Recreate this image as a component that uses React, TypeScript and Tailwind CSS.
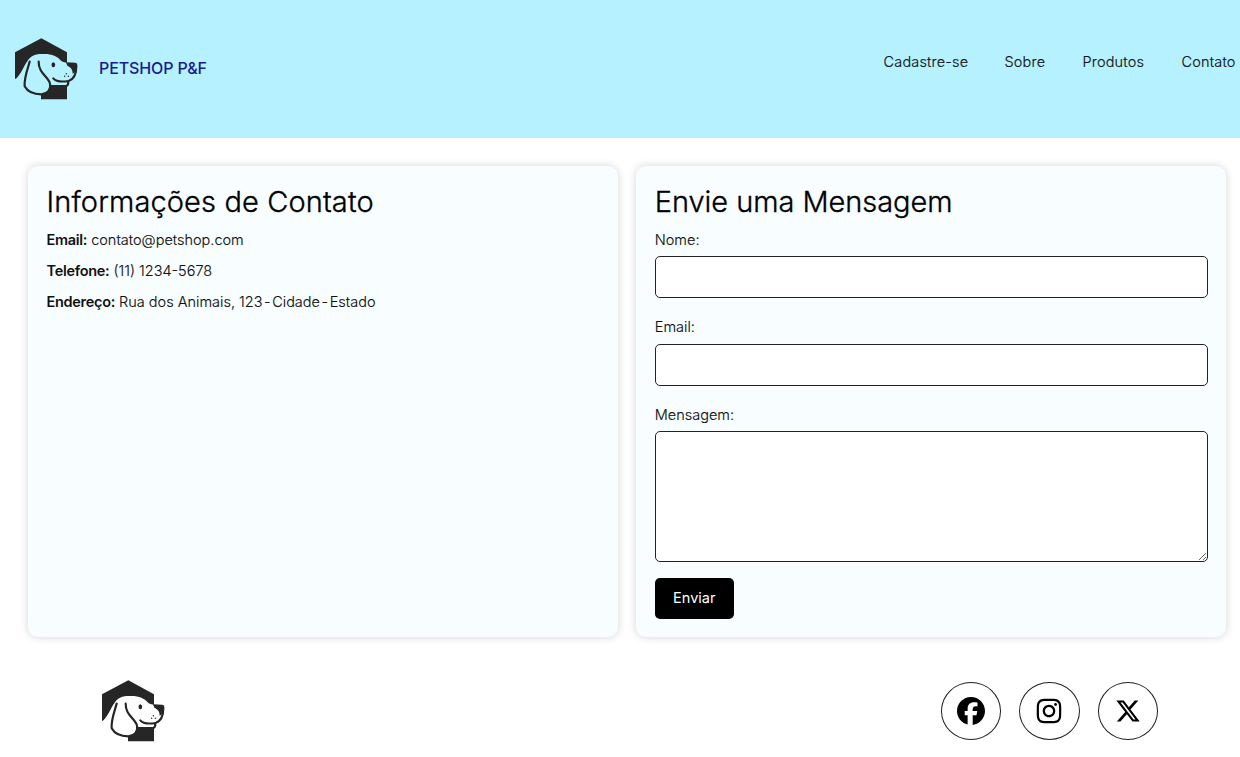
import { FaFacebook, FaInstagram, FaXTwitter } from "react-icons/fa6";

function DogLogo({ face }: { face: string }) {
  return (
    <svg width="65" height="63" viewBox="42 39 195 189" className="block shrink-0" aria-label="Petshop P&F">
      <path d="M45 82 L124 40 L201 82 V114 C196 111 190 113 184 108 C170 92 156 86 127 87 C106 87 92 91 82 109 C72 122 62 150 47 162 Q45 162 45 159 Z" fill="#262626" />
      <path d="M123 206 C142 206 153 194 153 180 H201 V223 H123 Z" fill="#262626" />
      <path d="M198 112 L226 113 Q233 114 232 121 L227 140 L218 146 C218 132 211 126 202 122 Z" fill="#262626" />
      <path d="M90 110 C82 135 72 158 74 184 C83 201 104 208 124 208 C143 207 154 193 150 176 C146 155 115 145 116 110" fill={face} />
      <g fill="none" stroke="#262626" strokeWidth="6.5" strokeLinecap="round" strokeLinejoin="round">
        <path d="M229 124 C229 146 221 163 206 168 C187 171 167 169 160 160" />
        <path d="M204 169 C206 176 205 180 199 183" />
        <path d="M89 110 C82 135 72 158 74 184 C83 201 104 208 124 208 C143 207 154 193 150 176 C146 155 115 145 116 110" />
      </g>
      <ellipse cx="160" cy="119" rx="5.5" ry="7.5" fill="#262626" />
      <g fill="#262626">
        <circle cx="199" cy="146" r="2.2" />
        <circle cx="194" cy="154" r="2.2" />
        <circle cx="205" cy="154" r="2.2" />
      </g>
    </svg>
  );
}

const links = [
  { label: "Cadastre-se", style: "w-[84px]" },
  { label: "Sobre", style: "w-[41px]" },
  { label: "Produtos", style: "w-[62px]" },
  { label: "Contato", style: "w-[54px]" },
];

const field = "block w-full rounded-[5px] border border-[#222] bg-white";
const strong = "font-semibold tracking-[-0.3px] [-webkit-text-stroke:0]";
const social = "flex h-[58px] w-[60.5px] items-center justify-center rounded-[50%] border border-[#222]";
const card = "rounded-[10px] bg-[#f8feff] pt-[18px] pr-[18px] pl-[19px] shadow-[0_0_9px_rgba(0,0,0,0.17)]";
const heading = "text-[29px] leading-[36px] whitespace-nowrap text-black [-webkit-text-stroke:0.35px_black]";

export default function App() {
  return (
    <div className="h-[757px] overflow-hidden bg-white font-['Inter',sans-serif] text-[14.5px] leading-[22px] font-light text-[#111] [-webkit-text-stroke:0.15px_#111]">
      <header className="flex h-[138px] items-start justify-between bg-[#b5f1ff] pt-[38px] pr-[4.5px] pl-[14px]">
        <div className="flex items-start">
          <DogLogo face="#b5f1ff" />
          <span className="mt-[19px] ml-5 text-[16px] font-medium tracking-[-0.1px] whitespace-nowrap text-[#1a1a8c] [-webkit-text-stroke:0]">PETSHOP P&amp;F</span>
        </div>
        <nav className="mt-[12.5px] flex gap-[37px] tracking-[0.18px]">
          {links.map((l) => (
            <a key={l.label} href="#" className={`${l.style} whitespace-nowrap`}>{l.label}</a>
          ))}
        </nav>
      </header>

      <main className="mt-[27.5px] grid h-[471.5px] grid-cols-2 gap-[18px] pr-[14px] pl-[27.5px]">
        <section className={card}>
          <h2 className={`${heading} tracking-[0.12px]`}>Informações de Contato</h2>
          <div className="mt-[9px] flex flex-col gap-[9.4px] whitespace-nowrap">
            <p><strong className={strong}>Email:</strong> contato@petshop.com</p>
            <p><strong className={strong}>Telefone:</strong> (11) 1234-5678</p>
            <p><strong className={strong}>Endereço:</strong> Rua dos Animais, 123<span className="[word-spacing:-2.5px]"> - </span>Cidade<span className="[word-spacing:-2.5px]"> - </span>Estado</p>
          </div>
        </section>

        <section className={card}>
          <h2 className={`${heading} tracking-[-0.05px]`}>Envie uma Mensagem</h2>
          <form className="mt-[9px]">
            <label className="block">Nome:</label>
            <input className={`${field} mt-[5.5px] h-[42px]`} />
            <label className="mt-[18px] block">Email:</label>
            <input className={`${field} mt-[5.5px] h-[42px]`} />
            <label className="mt-[18px] block">Mensagem:</label>
            <textarea className={`${field} mt-[5.5px] h-[131px] resize-y`} />
            <button type="button" className="mt-4 block h-[41px] w-[79px] rounded-[5px] bg-black pb-[2px] font-normal text-white [-webkit-text-stroke:0]">Enviar</button>
          </form>
        </section>
      </main>

      <footer className="mt-[43px] flex items-start justify-between pr-[82px] pl-[101px] text-black">
        <DogLogo face="#ffffff" />
        <div className="mt-[2px] flex gap-[18px]">
          <a href="#" className={social}><FaFacebook size={28} /></a>
          <a href="#" className={social}><FaInstagram size={28} /></a>
          <a href="#" className={social}><FaXTwitter size={26} /></a>
        </div>
      </footer>
    </div>
  );
}
